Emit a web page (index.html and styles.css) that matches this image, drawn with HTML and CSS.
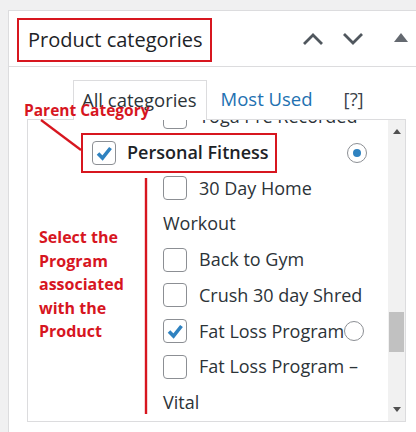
FILE: index.html
```html
<!DOCTYPE html>
<html lang="en">
<head>
<meta charset="utf-8">
<title>Product categories</title>
<link rel="stylesheet" href="styles.css">
</head>
<body>
<div class="page">
  <div class="postbox">
    <div class="postbox-header">
      <h2 class="hndle">Product categories</h2>
      <div class="actions">
        <svg class="chev" width="22" height="12" viewBox="0 0 22 12"><path d="M2 11 L11 2 L20 11" fill="none" stroke="#50575e" stroke-width="2.8"/></svg>
        <svg class="chev down" width="22" height="12" viewBox="0 0 22 12"><path d="M2 1 L11 10 L20 1" fill="none" stroke="#50575e" stroke-width="2.8"/></svg>
        <svg class="tri" width="14" height="9" viewBox="0 0 14 9"><path d="M0 9 L7 0 L14 9 Z" fill="#646970"/></svg>
      </div>
    </div>
    <div class="inside">
      <ul class="tabs">
        <li class="tab active">All categories</li>
        <li class="tab link">Most Used</li>
        <li class="tab help">[?]</li>
      </ul>
      <div class="catbox">
        <div class="scroll-view">
          <ul class="cats">
            <li class="row child"><span class="cb"></span>Yoga Pre Recorded</li>
            <li class="row parent">
              <label class="pf"><span class="cb on"><svg width="22" height="22" viewBox="0 0 22 22"><path d="M5 11.5 L9.5 16 L17.5 6" fill="none" stroke="#2f82c0" stroke-width="3.6"/></svg></span>Personal Fitness</label>
              <span class="radio on"></span>
            </li>
            <li class="row child"><span class="cb"></span>30 Day Home<br>Workout</li>
            <li class="row child"><span class="cb"></span>Back to Gym</li>
            <li class="row child"><span class="cb"></span>Crush 30 day Shred</li>
            <li class="row child"><span class="cb on"><svg width="22" height="22" viewBox="0 0 22 22"><path d="M5 11.5 L9.5 16 L17.5 6" fill="none" stroke="#2f82c0" stroke-width="3.6"/></svg></span>Fat Loss Program<span class="radio"></span></li>
            <li class="row child"><span class="cb"></span>Fat Loss Program –<br>Vital</li>
          </ul>
        </div>
        <div class="sbar">
          <span class="sb-arrow up"></span>
          <span class="sb-thumb"></span>
          <span class="sb-arrow dn"></span>
        </div>
      </div>
    </div>
  </div>

  <svg class="ann-lines" width="416" height="432" viewBox="0 0 416 432">
    <line x1="41" y1="120" x2="81" y2="150" stroke="#d7161f" stroke-width="2.2"/>
    <line x1="146" y1="178" x2="146" y2="414" stroke="#d7161f" stroke-width="2.4"/>
  </svg>
  <div class="ann ann-parent">Parent Category</div>
  <div class="ann ann-select">Select the Program associated with the Product</div>
</div>
</body>
</html>
```

FILE: styles.css
```css
* { box-sizing: border-box; margin: 0; padding: 0; }

html, body {
  width: 416px;
  height: 432px;
  overflow: hidden;
}

body {
  background: #f0f0f1;
  font-family: "Open Sans", "Noto Sans", sans-serif;
  color: #2c3338;
}

.page {
  position: relative;
  width: 416px;
  height: 432px;
  padding: 10px 0 0 8px;
}

.postbox {
  width: 430px;
  height: 440px;
  background: #fff;
  border: 1px solid #dcdcde;
}

.postbox-header {
  display: flex;
  align-items: center;
  height: 56px;
  border-bottom: 1px solid #dcdcde;
}

.hndle {
  align-self: flex-start;
  margin: 7px 0 0 8px;
  width: 195px;
  height: 44px;
  border: 2px solid #d7161f;
  padding-left: 9px;
  font-size: 20px;
  font-weight: 400;
  line-height: 40px;
  color: #1d2327;
  white-space: nowrap;
}

.actions {
  margin-left: auto;
  display: flex;
  align-items: center;
  padding-right: 29px;
}

.chev { display: block; }
.chev.down { margin-left: 18px; }
.tri { display: block; margin-left: 30px; margin-top: -2px; }

.inside {
  padding: 13px 0 0 18px;
}

.tabs {
  display: flex;
  list-style: none;
  margin-left: 46px;
  height: 39px;
  font-size: 18.5px;
}

.tab {
  line-height: 38px;
  white-space: nowrap;
}

.tab.active {
  position: relative;
  z-index: 1;
  height: 40px;
  border: 1px solid #dcdcde;
  border-bottom: none;
  background: #fff;
  padding: 0 9px 0 8px;
  color: #2c3338;
}

.tab.link {
  margin-left: 14px;
  color: #2271b1;
}

.tab.help {
  margin-left: 31px;
  color: #3c434a;
}

.catbox {
  display: flex;
  width: 379px;
  height: 303px;
  border: 1px solid #dcdcde;
}

.scroll-view {
  flex: 1;
  overflow: hidden;
  background: #fff;
}

.cats {
  list-style: none;
  margin-top: -21px;
}

.row {
  font-size: 18px;
  line-height: 35.75px;
  color: #2c3338;
  white-space: nowrap;
}

.row.child { padding-left: 135px; }

.row.parent {
  display: flex;
  align-items: center;
  height: 35.75px;
  padding-left: 55px;
}

.pf {
  display: flex;
  align-items: center;
  width: 192px;
  height: 35.75px;
  padding-left: 9px;
  font-weight: 600;
  color: #1d2327;
  outline: 2px solid #d7161f;
}

.cb {
  display: inline-block;
  vertical-align: middle;
  width: 24px;
  height: 24px;
  margin: -3px 12px 0 0;
  border: 1px solid #8c8f94;
  border-radius: 4px;
  background: #fff;
  position: relative;
}

.pf .cb { margin: 0 11px 0 0; }

.cb svg {
  position: absolute;
  left: 0;
  top: 0;
}

.radio {
  display: inline-block;
  vertical-align: middle;
  width: 20px;
  height: 20px;
  margin-top: -3px;
  border: 1px solid #8c8f94;
  border-radius: 50%;
  background: #fff;
  position: relative;
}

.row.parent .radio {
  margin: 0 21px 0 auto;
}

.radio.on::after {
  content: "";
  position: absolute;
  left: 5px;
  top: 5px;
  width: 8px;
  height: 8px;
  border-radius: 50%;
  background: #2f82c0;
}

.sbar {
  width: 17px;
  background: #f1f1f1;
  display: flex;
  flex-direction: column;
  align-items: center;
}

.sb-arrow {
  width: 0;
  height: 0;
  border-left: 4.5px solid transparent;
  border-right: 4.5px solid transparent;
}

.sb-arrow.up {
  margin-top: 9px;
  border-bottom: 5px solid #505050;
}

.sb-thumb {
  width: 15px;
  height: 40px;
  margin-top: 178px;
  background: #c1c1c1;
}

.sb-arrow.dn {
  margin-top: auto;
  margin-bottom: 9px;
  border-top: 5px solid #505050;
}

.ann-lines {
  position: absolute;
  left: 0;
  top: 0;
  z-index: 2;
  pointer-events: none;
}

.ann {
  position: absolute;
  z-index: 3;
  color: #d7161f;
  font-weight: 700;
  font-family: "Open Sans", "Noto Sans", sans-serif;
}

.ann-parent {
  left: 24px;
  top: 100px;
  font-size: 15.5px;
  line-height: 20px;
  white-space: nowrap;
}

.ann-select {
  left: 39px;
  top: 226px;
  width: 100px;
  font-size: 16px;
  line-height: 23.5px;
}
```
